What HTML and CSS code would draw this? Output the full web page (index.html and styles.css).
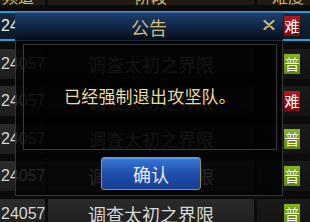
FILE: index.html
```html
<!DOCTYPE html>
<html>
<head>
<meta charset="utf-8">
<link rel="stylesheet" href="styles.css">
</head>
<body>
<div class="screen">
  <div class="table">
    <div class="row head"><div class="c ch">频道</div><div class="c st">阶段</div><div class="c df">难度</div></div>
    <div class="row sel"><div class="c ch">24057</div><div class="c st">调查太初之界限</div><div class="c df"><span class="badge hard">难</span></div></div>
    <div class="row"><div class="c ch">24057</div><div class="c st">调查太初之界限</div><div class="c df"><span class="badge norm">普</span></div></div>
    <div class="row"><div class="c ch">24057</div><div class="c st">调查太初之界限</div><div class="c df"><span class="badge hard">难</span></div></div>
    <div class="row"><div class="c ch">24057</div><div class="c st">调查太初之界限</div><div class="c df"><span class="badge norm">普</span></div></div>
    <div class="row"><div class="c ch">24057</div><div class="c st">调查太初之界限</div><div class="c df"><span class="badge norm">普</span></div></div>
    <div class="row"><div class="c ch">24057</div><div class="c st">调查太初之界限</div><div class="c df"><span class="badge norm">普</span></div></div>
  </div>
  <div class="modal">
    <div class="title">
      <span class="title-text">公告</span>
      <span class="close"><svg width="12" height="10" viewBox="0 0 12 10"><path d="M1.5 1 L10.5 9 M10.5 1 L1.5 9" stroke="#cdb676" stroke-width="2.2" stroke-linecap="round"/></svg></span>
    </div>
    <div class="body">
      <div class="msg">已经强制退出攻坚队。</div>
      <div class="actions"><div class="btn">确认</div></div>
    </div>
  </div>
</div>
</body>
</html>
```
FILE: styles.css
```css
html, body {
  margin: 0;
  padding: 0;
  background: #0a0a0a;
}
.screen {
  position: relative;
  width: 310px;
  height: 222px;
  overflow: hidden;
  background: #0b0b0b;
  font-family: "Noto Sans CJK SC", "Liberation Sans", sans-serif;
}
.table {
  display: flex;
  flex-direction: column;
  gap: 7.5px;
  margin-top: -16px;
}
.row {
  display: grid;
  grid-template-columns: 45px 206px 1fr;
  column-gap: 3px;
  height: 30px;
  box-sizing: border-box;
}
.row .c {
  display: flex;
  align-items: center;
  background: linear-gradient(#2b2b2b, #1d1d1d);
  color: #d6d6d6;
}
.row .ch {
  font-family: "Liberation Sans", sans-serif;
  font-size: 16px;
  padding-left: 1px;
}
.row .st {
  justify-content: center;
  font-size: 18px;
}
.row .df {
  padding-left: 27px;
  background: linear-gradient(#1a1a1a, #121212);
}
.head {
  height: 21px;
  margin-bottom: -1.5px;
}
.head .c {
  background: linear-gradient(#2a2418, #1e1a12);
  color: #cdb676;
  font-size: 16px;
  align-items: flex-end;
  line-height: 16px;
  padding-bottom: 1px;
}
.head .ch {
  font-family: "Noto Sans CJK SC", sans-serif;
  padding-left: 2px;
}
.head .df {
  padding-left: 15px;
}
.sel {
  border-top: 2px solid #1f9ee0;
  border-bottom: 2px solid #1f9ee0;
  background: linear-gradient(#13283e, #0c1826);
}
.sel .c, .sel .df {
  background: transparent;
  color: #f0f0f0;
}
.badge {
  display: flex;
  align-items: center;
  justify-content: center;
  width: 16px;
  height: 20px;
  font-size: 15px;
  line-height: 20px;
  color: #ffffff;
}
.hard {
  background: linear-gradient(#b0181c, #7a0c10);
}
.norm {
  background: linear-gradient(#86b81c, #5e8a0c);
  text-shadow: 0 0 1px #2a4000;
}
.modal {
  position: absolute;
  left: 15px;
  top: 12px;
  width: 268px;
  height: 184px;
  display: flex;
  flex-direction: column;
}
.title {
  height: 28px;
  box-sizing: border-box;
  border-top: 1px solid #3a6aa6;
  background: linear-gradient(#1e3f6e 0%, #112a4c 45%, #060c18 100%);
  display: flex;
  align-items: center;
  justify-content: center;
  position: relative;
}
.title-text {
  color: #d4bc78;
  font-size: 18px;
  line-height: 20px;
}
.close {
  position: absolute;
  right: 8px;
  top: 7px;
  display: flex;
}
.body {
  flex: 1;
  box-sizing: border-box;
  border: 1px solid #353535;
  border-top: 1px solid #1a2a40;
  background: rgba(3, 3, 3, 0.85);
  padding: 3px 5px 5px 7px;
  display: flex;
  flex-direction: column;
}
.msg {
  height: 106px;
  box-sizing: border-box;
  border: 1px solid #3a3a3a;
  background: rgba(0, 0, 0, 0.45);
  display: flex;
  align-items: center;
  justify-content: center;
  color: #e8dba4;
  font-size: 17px;
  letter-spacing: 0.2px;
  padding-bottom: 4px;
}
.actions {
  display: flex;
  justify-content: center;
  margin-top: 7px;
  padding-left: 2px;
}
.btn {
  width: 100px;
  height: 33px;
  box-sizing: border-box;
  border: 1px solid #9c8c5c;
  border-radius: 3px;
  background: linear-gradient(#3a78d8 0%, #1f4fac 50%, #173f92 100%);
  box-shadow: inset 0 1px 0 rgba(140, 190, 255, 0.5);
  color: #e8eef8;
  font-size: 18px;
  display: flex;
  align-items: center;
  justify-content: center;
}
```
